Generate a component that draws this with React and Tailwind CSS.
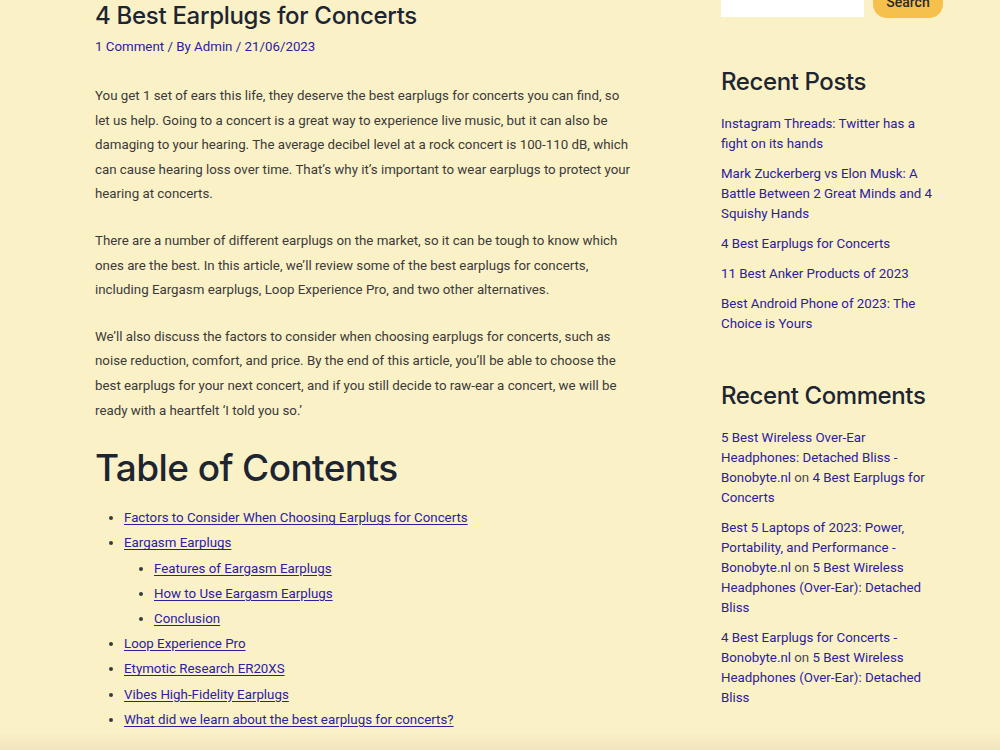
import React from 'react';

const toc = [
  { label: 'Factors to Consider When Choosing Earplugs for Concerts' },
  {
    label: 'Eargasm Earplugs',
    children: ['Features of Eargasm Earplugs', 'How to Use Eargasm Earplugs', 'Conclusion'],
  },
  { label: 'Loop Experience Pro' },
  { label: 'Etymotic Research ER20XS' },
  { label: 'Vibes High-Fidelity Earplugs' },
  { label: 'What did we learn about the best earplugs for concerts?' },
];

const recentPosts = [
  'Instagram Threads: Twitter has a fight on its hands',
  'Mark Zuckerberg vs Elon Musk: A Battle Between 2 Great Minds and 4 Squishy Hands',
  '4 Best Earplugs for Concerts',
  '11 Best Anker Products of 2023',
  'Best Android Phone of 2023: The Choice is Yours',
];

const recentComments = [
  { author: '5 Best Wireless Over-Ear Headphones: Detached Bliss - Bonobyte.nl', post: '4 Best Earplugs for Concerts' },
  { author: 'Best 5 Laptops of 2023: Power, Portability, and Performance - Bonobyte.nl', post: '5 Best Wireless Headphones (Over-Ear): Detached Bliss' },
  { author: '4 Best Earplugs for Concerts - Bonobyte.nl', post: '5 Best Wireless Headphones (Over-Ear): Detached Bliss' },
];

const heading = "font-['Inter',sans-serif] text-[#1e2532]";

const App = () => {
  return (
    <div className="min-h-[750px] bg-[#fbf1c7] font-['Roboto',sans-serif] text-[13.3px] text-[#3a3a3a] overflow-hidden">
      <div className="flex">
        {/* Article */}
        <main className="ml-[95px] w-[542px]">
          <h1 className={`${heading} text-[24px] leading-[32px] font-medium tracking-[-0.3px]`}>
            4 Best Earplugs for Concerts
          </h1>
          <div className="mt-[5px] leading-[20px] text-[#2b20a2]">
            <a href="#">1 Comment</a> / By <a href="#">Admin</a> / 21/06/2023
          </div>

          <div className="mt-[27px] leading-[24.6px]">
            <p className="mb-[22px]">
              You get 1 set of ears this life, they deserve the best earplugs for concerts you can find, so let us help. Going to a concert is a great way to experience live music, but it can also be damaging to your hearing. The average decibel level at a rock concert is 100-110 dB, which can cause hearing loss over time. That’s why it’s important to wear earplugs to protect your hearing at concerts.
            </p>
            <p className="mb-[22px]">
              There are a number of different earplugs on the market, so it can be tough to know which ones are the best. In this article, we’ll review some of the best earplugs for concerts, including Eargasm earplugs, Loop Experience Pro, and two other alternatives.
            </p>
            <p>
              We’ll also discuss the factors to consider when choosing earplugs for concerts, such as noise reduction, comfort, and price. By the end of this article, you’ll be able to choose the best earplugs for your next concert, and if you still decide to raw-ear a concert, we will be ready with a heartfelt ‘I told you so.’
            </p>
          </div>

          <h2 className={`${heading} mt-[21px] text-[37px] leading-[48px] font-medium tracking-[-0.6px]`}>
            Table of Contents
          </h2>

          <ul className="mt-[13px] pl-[29px] list-disc leading-[25.2px] marker:text-[#3a3a3a]">
            {toc.map(item => (
              <li key={item.label}>
                <a href="#" className="text-[#2b20a2] underline underline-offset-2">{item.label}</a>
                {item.children && (
                  <ul className="pl-[30px] list-disc">
                    {item.children.map(child => (
                      <li key={child}>
                        <a href="#" className="text-[#2b20a2] underline underline-offset-2">{child}</a>
                      </li>
                    ))}
                  </ul>
                )}
              </li>
            ))}
          </ul>
        </main>

        {/* Sidebar */}
        <aside className="ml-[84px] w-[216px] shrink-0">
          <div className="-mt-[14px] flex items-start gap-[9px]">
            <div className="mt-[-9px] h-[40px] w-[143px] shrink-0 bg-white" />
            <button className="h-[32px] w-[70px] shrink-0 rounded-[14px] bg-[#f6c04d] text-[14px] font-medium text-[#2a2a2a]">
              Search
            </button>
          </div>

          <h2 className={`${heading} mt-[48px] text-[24px] leading-[32px] font-medium tracking-[-0.4px]`}>
            Recent Posts
          </h2>
          <ul className="mt-[16px] flex flex-col gap-[10px] leading-[20px]">
            {recentPosts.map(post => (
              <li key={post}>
                <a href="#" className="text-[#2b20a2]">{post}</a>
              </li>
            ))}
          </ul>

          <h2 className={`${heading} mt-[46px] text-[24px] leading-[32px] font-medium tracking-[-0.4px]`}>
            Recent Comments
          </h2>
          <ul className="mt-[16px] flex flex-col gap-[10px] leading-[20px] text-[#4a4a4a]">
            {recentComments.map((c, i) => (
              <li key={i}>
                <a href="#" className="text-[#2b20a2]">{c.author}</a> on{' '}
                <a href="#" className="text-[#2b20a2]">{c.post}</a>
              </li>
            ))}
          </ul>
        </aside>
      </div>

      {/* bottom shade */}
      <div className="fixed bottom-0 left-0 right-0 h-[18px] bg-gradient-to-b from-[#fbf1c700] to-[#efe4bb]" />
    </div>
  );
};

export default App;
